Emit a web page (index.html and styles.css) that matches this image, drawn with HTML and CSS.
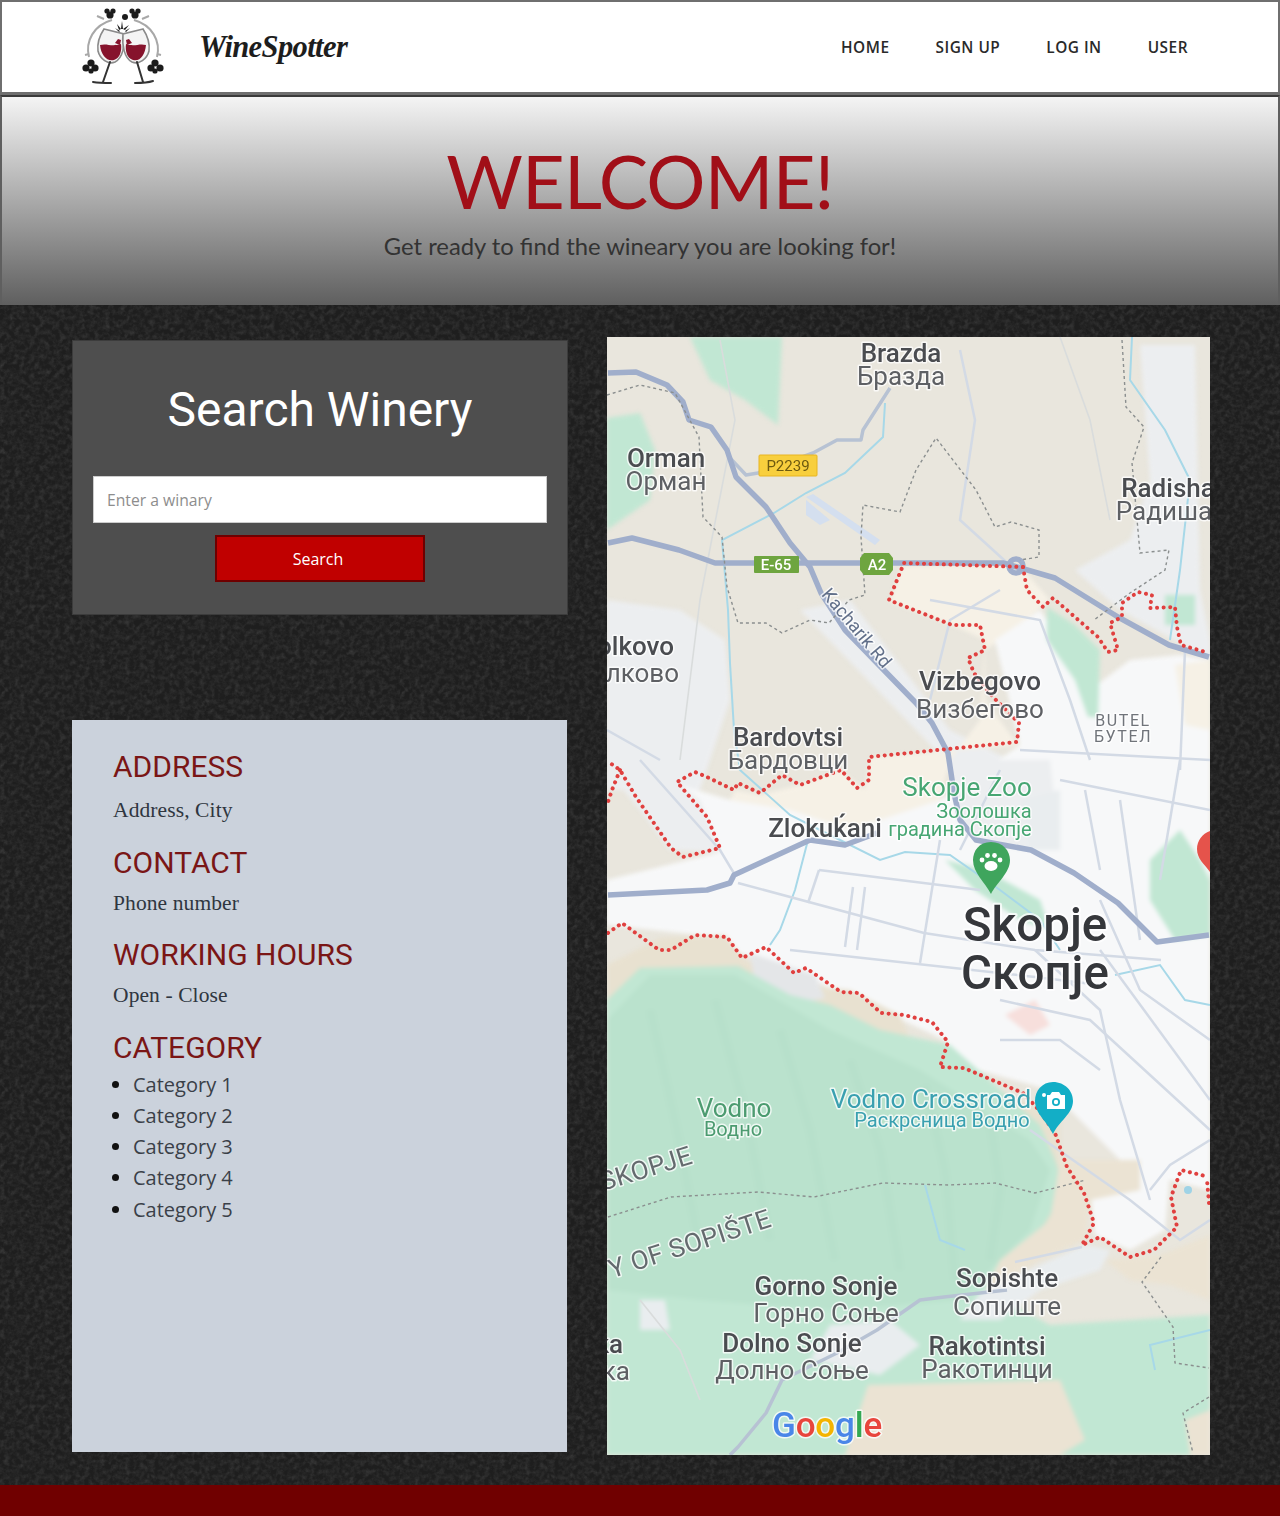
FILE: index.html
```html
<!DOCTYPE html>
<html lang="en">
<head>
<meta charset="utf-8">
<title>WineSpotter</title>
<link rel="stylesheet" href="styles.css">
</head>
<body>
<header class="topbar">
  <div class="brand">
    <svg class="logo" viewBox="80 4 86 84" width="86" height="84" aria-label="WineSpotter logo">
      <g class="vine">
        <path d="M112 19C94 24 85 40 89 56"/>
        <path d="M134 19C152 24 161 40 157 56"/>
        <path d="M104 18l-7-3M142 18l7-3M89 53l-4 1M157 53l4 1"/>
      </g>
      <g class="leaf">
        <circle cx="107" cy="10" r="2.6"/><circle cx="113" cy="10" r="2.6"/><circle cx="110" cy="14" r="3.6"/>
        <circle cx="132" cy="10" r="2.6"/><circle cx="138" cy="10" r="2.6"/><circle cx="135" cy="14" r="3.6"/>
        <circle cx="125" cy="16" r="3"/>
        <circle cx="91" cy="62" r="3.6"/><circle cx="86" cy="67" r="3.6"/><circle cx="95" cy="67" r="3.6"/><circle cx="91" cy="70" r="2.6"/>
        <circle cx="155" cy="62" r="3.6"/><circle cx="160" cy="67" r="3.6"/><circle cx="151" cy="67" r="3.6"/><circle cx="155" cy="70" r="2.6"/>
        <path d="M122 20l1 8-2 0zM117 23l4 5-2 1zM129 24l-4 5-2-1zM115 27l5 3-1 1zM130 27l-5 3 1 1z"/>
      </g>
      <g class="glass">
        <path d="M104 28l20 5c1 11-1 24-9 28-7 3-15-3-17-11-1-8 2-16 6-22z"/>
        <path d="M143 28l-20 5c-1 11 1 24 9 28 7 3 15-3 17-11 1-8-2-16-6-22z"/>
      </g>
      <path class="wine" d="M100 44c7-2 11 2 21-1 1 7-1 14-7 16-7 2-13-5-14-15z"/>
      <path class="wine" d="M146 44c-7-2-11 2-20-1-1 7 1 14 7 16 7 2 12-5 13-15z"/>
      <path class="wine" d="M115 42l3-4 3 1-1 5zM132 42l-3-4-3 1 1 5z"/>
      <g class="stem">
        <path d="M110 61l-7 20M137 61l6 20"/>
        <path d="M93 81c6 1 12 1 18 1M135 82c6 0 12 0 18-2" />
      </g>
    </svg>
    <span class="wordmark">WineSpotter</span>
  </div>
  <nav class="nav">
    <a href="#">HOME</a>
    <a href="#">SIGN UP</a>
    <a href="#">LOG IN</a>
    <a href="#">USER</a>
  </nav>
</header>

<section class="hero">
  <h1>WELCOME!</h1>
  <p>Get ready to find the wineary you are looking for!</p>
</section>

<main class="content">
  <div class="side">
    <section class="search-card">
      <h2>Search Winery</h2>
      <input class="search-input" type="text" placeholder="Enter a winary">
      <button class="search-btn" type="button">Search</button>
    </section>
    <section class="info-card">
      <h3>ADDRESS</h3>
      <p>Address, City</p>
      <h3>CONTACT</h3>
      <p>Phone number</p>
      <h3>WORKING HOURS</h3>
      <p>Open - Close</p>
      <h3>CATEGORY</h3>
      <ul>
        <li>Category 1</li>
        <li>Category 2</li>
        <li>Category 3</li>
        <li>Category 4</li>
        <li>Category 5</li>
      </ul>
    </section>
  </div>

  <svg class="map" viewBox="607 337 603 1118" width="603" height="1118" role="img" aria-label="Map of Skopje">
    <rect class="z-base" x="607" y="337" width="603" height="1118"/>
    <g class="soft">
      <path class="z-green" d="M690 337H782L778 425L745 400L710 380Z"/>
      <path class="z-green" d="M607 418L640 413L655 450L650 500L607 530Z"/>
      <path class="z-grey" d="M607 600L680 610L725 640L730 700L700 790L607 790Z"/>
      <path class="z-grey" d="M1140 345H1195L1200 590L1210 640V660L1120 610L1075 570L1130 540L1150 480Z"/>
      <path class="z-grey" d="M800 610L850 600L950 730L1010 760L1050 760L1060 850L980 850L945 760Z"/>
      <path class="z-cream" d="M902 566L1020 566L1050 600L1000 640L985 650L985 700L1018 745L870 757L865 790L840 770L800 785L760 795L735 790L720 820L760 850L880 835L940 800L950 760L980 720L985 640L952 625L890 602Z"/>
      <path class="z-city" d="M995 640L1040 610L1060 640L1090 690L1130 660L1180 655L1210 660V1190L1130 1170L1090 1130L1050 1090L960 1065L945 1040L880 1010L790 970L745 955L700 935L607 925V880L720 852L700 800L680 785L730 800L790 810L850 830L940 800L1020 745Z"/>
      <path class="z-cream" d="M1175 665L1210 660V730L1185 725Z"/>
      <path class="z-grey" d="M607 770L640 810L670 850L720 852L700 800L680 785L640 730L607 730Z"/>
      <path class="z-grey" d="M950 760L1050 760L1060 850L1020 850L960 830Z"/>
      <path class="z-green" d="M1047 607L1075 625L1100 650L1098 717L1088 717L1075 680L1047 640Z"/>
      <path class="z-green" d="M1165 595H1195V625H1165Z"/>
      <path class="z-green" d="M1150 860L1180 830L1200 860L1210 880V935L1175 940L1150 900Z"/>
      <path class="z-green" d="M945 860L985 870L1040 900L1050 930L1020 920L975 890Z"/>
      <path class="z-tan" d="M607 965L660 938L725 935L745 960L800 985L850 990L900 1015L915 1050L960 1070L1060 1120L1060 1160L1140 1160L1140 1190L1090 1210L1040 1240L990 1290L940 1290L620 1010L607 1060Z"/>
      <path class="z-rock" d="M750 953L815 975L825 998L790 1005L755 985Z"/>
      <path class="z-green" d="M607 1000L640 968L738 966L790 995L830 1005L880 1030L950 1045L1040 1125L1055 1160L1065 1190L1035 1240L985 1290L1050 1325L1210 1315V1455H607Z"/>
      <path class="z-deep" d="M607 1020L650 975L735 975L830 1030L920 1070L1030 1140L1050 1170L1030 1230L960 1300L900 1305L830 1310L700 1300L607 1290Z"/>
      <path class="z-tan2" d="M868 1385L1060 1380L1085 1440L1060 1455H845Z"/>
      <path class="z-tan2" d="M1185 1420L1210 1410V1455H1190Z"/>
      <path class="z-tan2" d="M1105 1260L1160 1255L1210 1235V1300L1170 1285L1130 1280Z"/>
      <path class="z-city" d="M1090 1190L1130 1165L1170 1170L1165 1230L1130 1250L1095 1235Z"/>
      <path class="z-pale" d="M980 1293L1040 1265L1085 1245L1110 1250L1100 1270L1040 1290L1000 1320L960 1320Z"/>
      <path class="z-pale" d="M830 1325L890 1320L920 1345L880 1375L810 1360Z"/>
      <path class="z-tan2" d="M1060 1160L1140 1160L1140 1190L1090 1200L1085 1240L1040 1260L985 1290L1000 1260L1050 1220Z"/>
      <path class="z-pink" d="M1005 1015L1035 1000L1050 1025L1030 1035Z"/>
      <path class="z-pale" d="M640 1300L665 1300L670 1330L640 1330Z"/>
      <path class="z-pale" d="M1020 800L1060 790L1060 850L1030 850Z"/>
      <g class="ridges">
        <path d="M650 1010L675 1120L700 1250"/>
        <path d="M715 1000L745 1110L770 1240"/>
        <path d="M780 1030L810 1130L835 1260"/>
        <path d="M850 1060L880 1150L900 1270"/>
        <path d="M925 1085L945 1170L955 1280"/>
        <path d="M990 1120L1000 1190L990 1260"/>
      </g>
    </g>

    <g class="water">
      <path d="M885 403L883 437L845 473L806 493L774 513L722 540L728 610L730 663L734 730"/>
      <path d="M1132 337L1130 380L1165 430L1190 480L1180 570L1170 640"/>
      <path d="M734 730L740 770L790 815L830 835L880 860L905 852L950 855L1000 890L1040 920L1060 950"/>
      <path d="M808 840L795 890L780 930L770 945"/>
      <path d="M1115 975L1160 965L1185 1000L1210 1005"/>
      <path d="M925 1185L940 1240L965 1250"/>
      <path d="M1210 1330L1150 1345L1155 1370"/>
    </g>

    <g class="road-thin">
      <path d="M738 883L924 933L1035 950L1161 960"/>
      <path d="M790 950L1035 977L1100 985"/>
      <path d="M819 870L980 890"/>
      <path d="M819 870L808 903"/>
      <path d="M853 887L845 947"/>
      <path d="M865 887L857 950"/>
      <path d="M940 840L920 963"/>
      <path d="M1100 950L1210 1100"/>
      <path d="M1035 950L1100 1010L1120 1100L1150 1200"/>
      <path d="M1000 1000L1090 1020L1210 1130"/>
      <path d="M1120 800L1140 940"/>
      <path d="M1020 750L1210 760"/>
      <path d="M1060 780L1210 810"/>
      <path d="M1085 790L1100 870"/>
      <path d="M1180 760L1160 880"/>
      <path d="M1185 650L1180 770"/>
      <path d="M1000 590L950 620L930 700"/>
      <path d="M930 600L1040 620L1070 700L1090 760"/>
      <path d="M660 760L607 730M640 760L720 850L735 875"/>
      <path d="M1030 1130L1130 1200L1180 1240L1210 1220"/>
      <path d="M1210 1140L1170 1165L1150 1190"/>
      <path d="M960 850L980 810L1000 770"/>
      <path d="M1100 900L1140 990L1210 1040"/>
      <path d="M1000 1040L1060 1040L1100 1070"/>
      <path d="M960 350L975 420L960 520L1015 570"/>
      <path d="M1082 1247L1015 1262"/>
    </g>
    <g class="road-pale">
      <path d="M640 1300L680 1350L700 1400"/>
      <path d="M720 340L735 420L700 600L680 760"/>
      <path d="M1060 337L1090 420L1110 520"/>
    </g>

    <g class="road-mid">
      <path d="M890 388L863 430L861 440L837 440L813 453L758 473L746 475L730 458"/>
      <path d="M1007 1290L944 1297L920 1300L877 1330L837 1353L782 1380L766 1413L738 1447L730 1455"/>
    </g>

    <path class="airport" d="M806 497L813 494L880 540L875 545ZM806 500L830 520L820 525L806 515Z"/>

    <g class="motorway">
      <path d="M608 373L636 372L667 385L683 402L689 420L711 427L727 450L736 477L766 507L790 543L810 567L821 593L845 630L877 663L916 703L932 723L948 753L954 793L960 820L976 840L1031 850L1074 873L1118 903L1157 942L1209 935"/>
      <path d="M608 543L632 538L679 550L715 563L1003 563L1055 578L1118 617L1169 645L1209 657"/>
      <path d="M608 895L707 890L730 883L734 875L810 840L845 845L877 833"/>
      <circle cx="1016" cy="566" r="7"/>
    </g>

    <g class="dash">
      <path d="M607 395L640 385L675 393L699 437L703 517L722 537L727 587L738 623L766 623L782 633L810 620L829 623L849 600L865 595L861 537L863 505L900 512L916 470L936 438L976 490L995 527L1011 522L1039 530L1039 557L1020 560"/>
      <path d="M1122 340L1126 407L1144 427L1132 463L1140 553L1169 550L1165 570L1130 593L1094 620"/>
      <path d="M608 1217L671 1197L758 1192L814 1197L883 1183L948 1185L995 1183L1035 1193L1086 1180"/>
      <path d="M1161 1257L1142 1282L1173 1327L1175 1363L1209 1368"/>
      <path d="M1209 1397L1183 1413L1193 1453"/>
    </g>

    <g class="border">
      <path d="M1023 567L904 563L897 580L889 600L952 625L980 625L985 650L968 658L974 673L993 697L1019 723L1017 742L869 757L869 780L857 788L841 770L800 785L782 775L760 793L738 783L734 790L707 777L695 772L677 782L707 817L720 848L683 857L671 848L636 797L620 770L610 763"/>
      <path d="M620 770L612 790L607 805"/>
      <path d="M1023 567L1027 590L1043 607L1053 598L1098 637L1108 652L1118 650L1110 623L1122 617L1122 603L1138 592L1152 595L1150 608L1175 607L1177 627L1181 645L1209 653"/>
      <path d="M608 933L622 923L659 950L671 950L695 935L727 937L742 958L766 947L794 973L806 968L841 992L859 993L881 1013L904 1015L932 1022L948 1042L940 1067L964 1068L1023 1093L1039 1110L1055 1133L1067 1167L1084 1193L1094 1223L1082 1245L1100 1237L1130 1257L1154 1250L1177 1227L1171 1197L1181 1170L1209 1177"/>
      <path d="M1209 1203L1207 1180"/>
    </g>

    <circle class="lake" cx="1188" cy="1190" r="4"/>

    <g class="shield-y"><rect x="759" y="455" width="58" height="21" rx="1"/></g>
    <text class="shield-y-t" x="788" y="471">P2239</text>
    <rect class="shield-g" x="754" y="556" width="45" height="17" rx="1"/>
    <text class="shield-t" x="776" y="570">E-65</text>
    <path class="shield-g" d="M864 553H889L893 558V570L889 575H864L860 570V558Z"/>
    <text class="shield-t" x="877" y="570">A2</text>

    <g class="lbl strong">
      <text x="901" y="362">Brazda</text>
      <text x="666" y="467">Orman</text>
      <text x="1168" y="497">Radisha</text>
      <text x="980" y="690">Vizbegovo</text>
      <text x="788" y="746">Bardovtsi</text>
      <text x="825" y="837">Zlokuḱani</text>
      <text x="826" y="1295">Gorno Sonje</text>
      <text x="1007" y="1287">Sopishte</text>
      <text x="792" y="1352">Dolno Sonje</text>
      <text x="987" y="1355">Rakotintsi</text>
      <text class="end" x="674" y="655">Volkovo</text>
      <text class="end" x="623" y="1353">ka</text>
    </g>
    <g class="lbl light">
      <text x="901" y="385">Бразда</text>
      <text x="666" y="490">Орман</text>
      <text x="1164" y="520">Радиша</text>
      <text x="980" y="718">Визбегово</text>
      <text x="788" y="769">Бардовци</text>
      <text x="826" y="1322">Горно Соње</text>
      <text x="1007" y="1315">Сопиште</text>
      <text x="792" y="1379">Долно Соње</text>
      <text x="987" y="1378">Ракотинци</text>
      <text class="end" x="679" y="682">Волково</text>
      <text class="end" x="630" y="1380">ка</text>
    </g>
    <g class="district">
      <text x="1123" y="726">BUTEL</text>
      <text x="1123" y="742">БУТЕЛ</text>
    </g>
    <g class="muni">
      <text class="end" transform="translate(694 1163) rotate(-17)">OF SKOPJE</text>
      <text class="end" transform="translate(773 1226) rotate(-18)">CITY OF SOPIŠTE</text>
    </g>
    <text class="roadname" transform="translate(852 632) rotate(50)">Kacharik Rd</text>

    <g class="poi-green">
      <text class="big" x="967" y="796">Skopje Zoo</text>
      <text class="small" x="984" y="818">Зоолошка</text>
      <text class="small" x="960" y="836">градина Скопје</text>
    </g>
    <g class="poi-forest">
      <text class="big" x="734" y="1117">Vodno</text>
      <text class="small" x="733" y="1136">Водно</text>
    </g>
    <g class="poi-teal">
      <text class="big" x="931" y="1108">Vodno Crossroad</text>
      <text class="small" x="942" y="1127">Раскрсница Водно</text>
    </g>

    <g class="city">
      <text x="1035" y="941">Skopje</text>
      <text x="1035" y="989">Скопје</text>
    </g>

    <path class="pin-green" d="M991 842C1003 842 1010 851 1010 860C1010 873 997 882 991 894C985 882 973 873 973 860C973 851 979 842 991 842Z"/>
    <g class="pin-ico">
      <ellipse cx="991" cy="866" rx="6.5" ry="5"/>
      <circle cx="982" cy="860" r="2.4"/>
      <circle cx="987.5" cy="855.5" r="2.4"/>
      <circle cx="994.5" cy="855.5" r="2.4"/>
      <circle cx="1000" cy="860" r="2.4"/>
    </g>
    <path class="pin-teal" d="M1053 1082C1065 1082 1073 1091 1073 1101C1073 1114 1059 1121 1053 1134C1047 1121 1035 1114 1035 1101C1035 1091 1042 1082 1053 1082Z"/>
    <g class="pin-ico">
      <path d="M1047 1095H1050L1052 1092H1059L1061 1095H1065V1109H1047Z"/>
      <circle class="pin-lens" cx="1056" cy="1102" r="4"/>
      <circle cx="1056" cy="1102" r="2.2"/>
      <circle cx="1044" cy="1095" r="2"/>
    </g>
    <path class="pin-red" d="M1216 830C1205 830 1197 839 1197 849C1197 860 1206 865 1212 875L1216 875Z"/>

    <text class="google" x="827" y="1437"><tspan class="g-b">G</tspan><tspan class="g-r">o</tspan><tspan class="g-y">o</tspan><tspan class="g-b">g</tspan><tspan class="g-g">l</tspan><tspan class="g-r">e</tspan></text>
  </svg>
</main>

<footer class="footer"></footer>
</body>
</html>
```

FILE: styles.css
```css
* { box-sizing: border-box; }

html, body { margin: 0; padding: 0; }

body {
  width: 1280px;
  height: 1516px;
  overflow: hidden;
  background-color: #1e1e1e;
  background-image: url("data:image/svg+xml,%3Csvg xmlns='http://www.w3.org/2000/svg' width='400' height='400'%3E%3Cfilter id='n'%3E%3CfeTurbulence type='fractalNoise' baseFrequency='0.2' numOctaves='3'/%3E%3CfeColorMatrix values='0 0 0 0 1 0 0 0 0 1 0 0 0 0 1 0.14 0.14 0 0 -0.115'/%3E%3C/filter%3E%3Crect width='400' height='400' filter='url(%23n)'/%3E%3C/svg%3E");
  font-family: "Open Sans", sans-serif;
}

/* Header */
.topbar {
  height: 95px;
  display: flex;
  align-items: center;
  justify-content: space-between;
  background: #fff;
  border: 2px solid #6f6f6f;
  border-bottom-width: 3px;
  padding: 0 90px 0 78px;
}

.brand {
  display: flex;
  align-items: center;
  gap: 33px;
}

.logo { display: block; filter: blur(0.5px); }

.vine path { fill: none; stroke: #a8a8a8; stroke-width: 2; }
.leaf path, .leaf circle { fill: #1c1c1c; }
.glass path { fill: #f4f4f4; stroke: #8a8a8a; stroke-width: 1.6; }
.wine { fill: #86132c; }
.stem path { fill: none; stroke: #333; stroke-width: 2; stroke-linecap: round; }

.wordmark {
  font-family: "Liberation Serif", serif;
  font-style: italic;
  font-weight: 700;
  font-size: 30.5px;
  letter-spacing: -0.6px;
  color: #1d1d1d;
}

.nav {
  display: flex;
  gap: 46px;
}

.nav a {
  font-size: 15.4px;
  font-weight: 600;
  letter-spacing: 0.5px;
  color: #2a2a2a;
  text-decoration: none;
}

/* Hero */
.hero {
  height: 210px;
  text-align: center;
  background: linear-gradient(#f4f4f4, #5f5f5f);
  border: 2px solid #5f5f5f;
  border-top-color: #3a3a3a;
  border-bottom: 0;
  padding-top: 42px;
}

.hero h1 {
  margin: 0;
  font-family: Lato, sans-serif;
  font-weight: 400;
  font-size: 74px;
  line-height: 84px;
  letter-spacing: -0.8px;
  color: #a10f18;
}

.hero p {
  margin: 7px 0 0;
  font-family: Lato, sans-serif;
  font-size: 23.8px;
  line-height: 32px;
  color: #333;
}

/* Main */
.content {
  display: flex;
  gap: 39px;
  padding: 32px 0 0 72px;
}

.side {
  width: 496px;
  padding-top: 3px;
}

.search-card {
  height: 275px;
  display: flex;
  flex-direction: column;
  align-items: center;
  padding: 35px 20px 0;
  background: #4e4e4e;
  border: 1px solid #3c3c3c;
}

.search-card h2 {
  margin: 0 0 32px;
  font-family: Roboto, sans-serif;
  font-weight: 400;
  font-size: 48px;
  line-height: 68px;
  color: #fff;
}

.search-input {
  width: 100%;
  height: 47px;
  padding: 0 13px;
  border: 1px solid #ccc;
  background: #fff;
  font-family: "Open Sans", sans-serif;
  font-size: 15.7px;
  outline: 0;
}

.search-input::placeholder { color: #8d8d8d; opacity: 1; }

.search-btn {
  width: 210px;
  height: 47px;
  margin: 12px 0 0;
  padding: 0 4px 0 0;
  background: #c00000;
  border: 2px solid #6e0000;
  color: #fff;
  font-family: "Open Sans", sans-serif;
  font-size: 16px;
}

.info-card {
  height: 732px;
  margin-top: 105px;
  width: 495px;
  padding: 27px 41px 0;
  background: #cbd2dc;
}

.info-card h3 {
  margin: 0 0 5px;
  font-family: Roboto, sans-serif;
  font-weight: 400;
  font-size: 30px;
  line-height: 40px;
  color: #7a1616;
}

.info-card h3:first-child { margin-bottom: 8px; }

.info-card p {
  margin: 0 0 17.5px;
  font-family: "Liberation Serif", serif;
  font-size: 21.5px;
  letter-spacing: 0.1px;
  line-height: 30px;
  color: #2f3640;
}

.info-card ul {
  margin: -4px 0 0;
  padding: 0 0 0 20px;
  font-size: 20px;
  line-height: 31.3px;
  color: #3a4048;
}

.info-card li::marker { color: #111; }

/* Map */
.map {
  display: block;
  flex: none;
  font-family: Roboto, sans-serif;
  text-anchor: middle;
  filter: blur(0.4px);
}

.soft { filter: blur(2px); }
.z-base { fill: #e9e6dd; }
.z-green { fill: #c1e7d3; }
.z-deep { fill: #bae2cd; }
.z-grey { fill: #eceef0; }
.z-cream { fill: #f6f1e6; }
.z-city { fill: #f7f8f9; }
.z-tan { fill: #e8e1d0; }
.z-tan2 { fill: #ebe3d3; }
.z-rock { fill: #e4e6e8; }
.z-pale { fill: #e9edef; }
.z-pink { fill: #f7dfdc; }

.ridges path { fill: none; stroke: #a9d6bd; stroke-width: 8; opacity: 0.14; }

.water path { fill: none; stroke: #a7d8e8; stroke-width: 2; }
.lake { fill: #9fd3e6; }
.road-thin path { fill: none; stroke: #d3dae5; stroke-width: 2.5; }
.road-pale path { fill: none; stroke: #d9dcdc; stroke-width: 1.6; }
.road-mid path { fill: none; stroke: #b7c2d3; stroke-width: 3.5; stroke-linejoin: round; }
.motorway path, .motorway circle { fill: none; stroke: #a0aecb; stroke-width: 5.5; stroke-linejoin: round; }
.airport { fill: #d4dfef; }
.dash path { fill: none; stroke: #8b8f8f; stroke-width: 1.4; stroke-dasharray: 3 3; }
.border path { fill: none; stroke: #e0403f; stroke-width: 4; stroke-linecap: round; stroke-dasharray: 0.1 6.5; }

.lbl text, .district text, .muni text, .poi-green text, .poi-forest text, .poi-teal text, .city text, .roadname, .google {
  paint-order: stroke;
  stroke: #fff;
  stroke-width: 3px;
  stroke-opacity: 0.75;
  stroke-linejoin: round;
}

.lbl text { font-size: 26px; }
.lbl .end, .muni .end { text-anchor: end; }
.strong text { font-weight: 500; fill: #4a4c50; }
.light text { fill: #5e6064; }

.district text { font-size: 16px; letter-spacing: 1.6px; fill: #70747a; }
.muni text { font-size: 26px; fill: #646a6e; letter-spacing: 0.5px; }
.roadname { font-size: 18.3px; fill: #62708a; }

.big { font-size: 26px; }
.small { font-size: 20px; }
.poi-green text { fill: #47a673; }
.poi-forest text { fill: #4c9b70; }
.poi-teal text { fill: #3aa0b0; }

.city text { font-size: 47.5px; font-weight: 500; fill: #35373b; stroke-width: 4px; }

.shield-y rect { fill: #f8cf3d; stroke: #e8b520; }
.shield-y-t { font-size: 15px; fill: #6e5a10; }
.shield-g { fill: #6ea53f; }
.shield-t { font-size: 15px; font-weight: 500; fill: #fff; }

.pin-green { fill: #3fa55d; }
.pin-teal { fill: #13aec6; }
.pin-red { fill: #e5534b; }
.pin-ico { fill: #fff; }
.pin-lens { fill: #13aec6; }

.google { font-size: 35px; font-weight: 500; letter-spacing: -0.2px; }
.g-b { fill: #4a86e8; }
.g-r { fill: #e8453c; }
.g-y { fill: #f4b400; }
.g-g { fill: #34a853; }

/* Footer */
.footer {
  position: absolute;
  left: 0;
  right: 0;
  top: 1485px;
  height: 31px;
  background: #700000;
}
```
